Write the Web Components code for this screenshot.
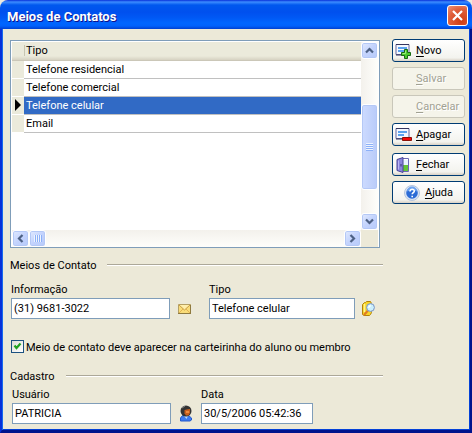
<!DOCTYPE html>
<html lang="pt-BR">
<head>
<meta charset="utf-8">
<title>Meios de Contatos</title>
<style>
  html, body { margin: 0; height: 100%; background: #eceadf; }
  body { font: 11px/16px Roboto, "Liberation Sans", sans-serif; color: #000; }
  .main { display: flex; flex-direction: column; flex: 1; min-width: 0; padding-top: 1px; }
  .row { display: flex; align-items: flex-end; }
  .contact { margin-top: 9px; padding-left: 1px; }
  .record { margin-top: 3px; padding-left: 2px; }
  .side { display: flex; flex-direction: column; gap: 5px; width: 73px; }
  .exit { display: flex; flex-direction: column; gap: 5px; margin-top: 2px; }
</style>
</head>
<body>
<xp-window caption="Meios de Contatos">
  <div class="main">
    <contact-grid></contact-grid>
    <section-title style="margin-top:9px">Meios de Contato</section-title>
    <div class="row contact">
      <text-field label="Informação" value="(31) 9681-3022" style="flex:159"></text-field>
      <app-icon name="mail"></app-icon>
      <text-field label="Tipo" value="Telefone celular" style="flex:146"></text-field>
      <app-icon name="search"></app-icon>
    </div>
    <check-field label="Meio de contato deve aparecer na carteirinha do aluno ou membro"></check-field>
    <section-title style="margin-top:12px">Cadastro</section-title>
    <div class="row record">
      <text-field label="Usuário" value="PATRICIA" style="flex:159"></text-field>
      <app-icon name="user"></app-icon>
      <text-field label="Data" value="30/5/2006 05:42:36" style="flex:112"></text-field>
      <span style="flex:70"></span>
    </div>
  </div>
  <div class="side">
    <action-button icon="add" text="Novo"></action-button>
    <action-button text="Salvar" disabled></action-button>
    <action-button text="Cancelar" disabled></action-button>
    <action-button icon="remove" text="Apagar"></action-button>
    <div class="exit">
      <action-button icon="door" text="Fechar"></action-button>
      <action-button icon="help" text="Ajuda" centered></action-button>
    </div>
  </div>
</xp-window>

<script>
const card = `
  <path d="M1 1.500h13v10H1z" fill="#f4f8ff" stroke="#67679c"/>
  <path d="M1 1.500h13" stroke="#34345e"/><path d="M1 12h13" stroke="#34345e"/>
  <path d="M3 5h9" stroke="#2a86e8" stroke-width="1.500"/><path d="M3 8h6" stroke="#2a86e8" stroke-width="1.500"/>`;
const icons = {
  add: [17, 16, card + `<path d="M9.500 6.500h3v3h3v3h-3v3h-3v-3h-3v-3h3z" fill="#4cc92f" stroke="#176b12"/><path d="M10.500 7.500v3h-3" fill="none" stroke="#9cf07c"/>`],
  remove: [17, 16, card + `<path d="M7.500 10.500h9v3h-9z" fill="#f50808" stroke="#8d1208"/>`],
  door: [15, 16, `
    <path d="M5.500 1.500h8v13h-8z" fill="#fff" stroke="#6c68b5"/>
    <path d="M7 8h6v6H7z" fill="#65c636"/><path d="M7 3h6v5H7z" fill="#e9f5ff"/>
    <path d="M2 2.500l6-2v15l-6-2z" fill="#8a85dc" stroke="#4a4595"/>
    <path d="M3.500 3.500v9" stroke="#bab6f5"/><path d="M6 7v2.500" stroke="#33306c"/>`],
  help: [16, 16, `
    <circle cx="8" cy="8" r="7.500" fill="#d9e4f4" stroke="#b4c4dd"/><circle cx="8" cy="8" r="5.800" fill="#2b6bd6"/>
    <path d="M3 6.500a5 5 0 0 1 10 0q-5-2-10 0z" fill="#6ea4f0"/>
    <path d="M6 6.500c0-3.200 4.500-2.800 4.300-.3C10.200 7.600 8.200 7.700 8.200 9.300M8.200 10.700v1.600" fill="none" stroke="#fff" stroke-width="1.600"/>`],
  mail: [13, 10, `
    <path d="M.5.500h12v9H.5z" fill="#f9dc78" stroke="#b5a063"/>
    <path d="M1 1l5.500 5L12 1" fill="#ffeeaa" stroke="#c89c42"/><path d="M1 9l4-4M12 9L8 5" stroke="#e3b352"/>
    <path d="M0 9.500h13M12.500 1v9" stroke="#8f7a3f"/>`],
  search: [13, 15, `
    <path d="M.5 3.500l2-2h1l1-1h4l1 2v9l-1 2-1 1H2l-1.500-1z" fill="#f7d428" stroke="#b28208"/>
    <path d="M2.500 3v8" stroke="#fff391" stroke-width="1.500"/>
    <path d="M6 9.500L2 14" stroke="#e07a24" stroke-width="2"/>
    <circle cx="8.500" cy="6.500" r="3.900" fill="#ccf0fc" stroke="#7793c4"/><path d="M6.500 6.500l2-2" stroke="#fff" stroke-width="1.500"/>`],
  user: [12, 17, `
    <path d="M.5 16v-3l2-2.500h6l3 2.500v2l-1.500 1z" fill="#3e7bf0" stroke="#2259cb"/>
    <path d="M4 11l2.500 3L8 11z" fill="#b7dcff"/>
    <circle cx="6" cy="6" r="5.500" fill="#343434"/><path d="M2 3l3-2" stroke="#888"/>
    <path d="M4.500 5q4-1 5.500-1v4L8.500 10.500H6L4.500 8.500z" fill="#c95f1d"/><path d="M6 6h3v2H6z" fill="#ee8a3c"/>`]
};
const svg = (name) => {
  const [w, h, body] = icons[name];
  return `<svg width="${w}" height="${h}" viewBox="0 0 ${w} ${h}" fill="none" aria-hidden="true">${body}</svg>`;
};
const chevron = (deg) => `<svg width="9" height="9" viewBox="0 0 9 9" fill="none" aria-hidden="true"><path d="M1 6.500L4.500 3L8 6.500" stroke="#4d6185" stroke-width="2.200" transform="rotate(${deg} 4.500 4.500)"/></svg>`;

class Base extends HTMLElement {
  connectedCallback() {
    if (!this.shadowRoot) this.attachShadow({ mode: "open" }).innerHTML =
      `<style>*{box-sizing:border-box}${this.css()}</style>${this.html()}`;
  }
}

customElements.define("xp-window", class extends Base {
  css() { return `
    :host { display: flex; flex-direction: column; min-height: 100vh; box-sizing: border-box; overflow: hidden;
      border-radius: 8px 8px 0 0; background: #ece9d8; }
    header { display: flex; align-items: center; justify-content: space-between; height: 29px; padding: 3px 4px 1px 7px;
      background: linear-gradient(#0831d9 0, #3c8cff 2px, #0058ee 5px, #0050ee 12px, #0059f5 18px, #0066ff 23px, #0061fc 26px, #0040d0 29px); }
    h1 { margin: 0; padding-top: 2px; font: bold 13px/18px Roboto, "Liberation Sans", sans-serif; color: #fff; text-shadow: 1px 1px #0f1089; }
    button { display: flex; align-items: center; justify-content: center; width: 21px; height: 21px; padding: 0;
      border: 1px solid #fff; border-radius: 3px; background: radial-gradient(circle at 70% 80%, #cf3c12, #e0603c 60%, #ee947c); }
    .body { display: flex; align-items: flex-start; gap: 9px; flex: 1; padding: 10px 5px 0 8px;
      border: solid; border-width: 0 2px 3px; border-color: #0019cf #00138c #00138c #0831d9;
      box-shadow: inset 1px 0 #166aee, inset -1px 0 #0441d8, inset 0 -1px #0441d8; }`; }
  html() { return `<header><h1>${this.getAttribute("caption")}</h1>
    <button aria-label="Fechar janela"><svg width="13" height="13" viewBox="0 0 13 13"><path d="M2 2l9 9M11 2l-9 9" stroke="#fff" stroke-width="2.200"/></svg></button></header>
    <div class="body"><slot></slot></div>`; }
});

customElements.define("contact-grid", class extends Base {
  css() { return `
    :host { display: grid; grid-template: 188px 17px / 1fr 17px; margin-right: 3px; padding: 1px 1px 0; border: 1px solid #7f9db9;
      background: #fff; box-sizing: border-box; height: 208px; }
    table { width: 100%; border-collapse: collapse; table-layout: fixed; }
    col.mark { width: 12px; }
    tr { height: 18px; }
    th, td { padding: 1px 0 0 1px; height: 18px; text-align: left; font-weight: normal; border-bottom: 1px solid #c0c0c0; line-height: 16px; }
    thead th { background: linear-gradient(#ebeadb 14px, #d6d2c2); border-bottom-color: #cbc7b8; }
    thead th + th { background: linear-gradient(#c7c5b2, #c7c5b2) 0 3px / 1px 11px no-repeat, linear-gradient(#ebeadb 14px, #d6d2c2); padding-left: 2px; }
    tbody td:first-child { background: #ebeadb; border-bottom-color: #fff; padding: 0 0 0 3px; }
    tbody td + td { padding-left: 2px; }
    tr.on td + td { background: #316ac5; color: #fff; }
    svg { display: block; }
    .v, .h { display: flex; background: linear-gradient(90deg, #f3f1ec, #fefefb); }
    .v { flex-direction: column; }
    .h { background: linear-gradient(#f3f1ec, #fefefb); }
    .corner { background: #ece9d8; }
    .v button, .h button, .thumb { display: flex; align-items: center; justify-content: center; flex: none; width: 17px; height: 17px; padding: 0;
      border: 1px solid #fff; border-radius: 3px; background: linear-gradient(135deg, #e1eafe, #c3d3fd 50%, #b6cafa); box-shadow: inset 0 0 0 1px #b4c8f6; }
    .v .thumb { height: 86px; background: linear-gradient(90deg, #cddbff, #b9cbf9); }
    .thumb i { width: 7px; height: 8px; background: repeating-linear-gradient(#eef4fe 0 1px, #8cb0f8 1px 2px); }
    .h .thumb i { width: 8px; height: 7px; background: repeating-linear-gradient(90deg, #eef4fe 0 1px, #8cb0f8 1px 2px); }
    .v .before { flex: 45; } .v .after { flex: 23; } .h .after { flex: 1; }`; }
  html() {
    const rows = ["Telefone residencial", "Telefone comercial", "Telefone celular", "Email"];
    return `<div><table><colgroup><col class="mark"><col></colgroup><thead><tr><th></th><th scope="col">Tipo</th></tr></thead><tbody>${
      rows.map((r, i) => `<tr${i === 2 ? ' class="on"' : ""}><td>${i === 2 ? '<svg width="6" height="12"><path d="M0 0l6 6-6 6z"/></svg>' : ""}</td><td>${r}</td></tr>`).join("")
    }</tbody></table></div>
    <div class="v"><button aria-label="Para cima">${chevron(0)}</button><span class="before"></span><span class="thumb"><i></i></span><span class="after"></span><button aria-label="Para baixo">${chevron(180)}</button></div>
    <div class="h"><button aria-label="Para a esquerda">${chevron(-90)}</button><span class="thumb"><i></i></span><span class="after"></span><button aria-label="Para a direita">${chevron(90)}</button></div>
    <div class="corner"></div>`;
  }
});

customElements.define("section-title", class extends Base {
  css() { return `
    :host { display: flex; align-items: center; gap: 11px; height: 16px; }
    h2 { margin: 0; padding-top: 2px; font: inherit; }
    hr { flex: 1; height: 2px; margin: 0; border: 0; border-top: 1px solid #aca899; border-bottom: 1px solid #fff; }`; }
  html() { return `<h2><slot></slot></h2><hr>`; }
});

customElements.define("text-field", class extends Base {
  css() { return `
    :host { display: flex; flex-direction: column; min-width: 0; }
    input { width: 100%; height: 21px; padding: 0 2px; border: 1px solid #7f9db9; background: #fff; color: #000; font: inherit; }`; }
  html() { return `<label for="f">${this.getAttribute("label")}</label><input id="f" type="text" value="${this.getAttribute("value")}">`; }
});

customElements.define("check-field", class extends Base {
  css() { return `
    :host { display: flex; margin-top: 21px; padding-left: 1px; }
    label { display: flex; align-items: flex-start; gap: 2px; white-space: nowrap; }
    input { appearance: none; width: 13px; height: 13px; margin: 0; border: 1px solid #1c5180; background: linear-gradient(135deg, #dcdcd7, #fff); }
    .box { display: grid; } .box > * { grid-area: 1 / 1; } svg { z-index: 1; pointer-events: none; visibility: hidden; }
    input:checked + svg { visibility: visible; }`; }
  html() { return `<label><span class="box"><input type="checkbox" checked><svg width="13" height="13" viewBox="0 0 13 13" fill="none"><path d="M3.500 5.500L5.500 8l4-4.500" stroke="#21a121" stroke-width="2.200"/></svg></span>${this.getAttribute("label")}</label>`; }
});

customElements.define("app-icon", class extends Base {
  css() { return `:host { display: flex; align-items: center; justify-content: center; flex: 0 0 30px; height: 21px; } :host([name=mail]) { flex-basis: 39px; justify-content: flex-start; padding-left: 8px; box-sizing: border-box; } :host([name=search]) { flex-basis: 28px; justify-content: flex-start; padding-left: 7px; box-sizing: border-box; }`; }
  html() { return svg(this.getAttribute("name")); }
});

customElements.define("action-button", class extends Base {
  css() { return `
    :host { display: block; }
    button { display: grid; grid-template-columns: 21px 1fr; align-items: center; width: 100%; height: 23px; padding: 1px 2px 0;
      border: 1px solid #003c74; border-radius: 3px; background: linear-gradient(#fff, #f3f3ee 85%, #d8d1c5);
      font: inherit; color: #000; text-align: left; }
    button svg { display: block; }
    :host([centered]) button { display: flex; justify-content: center; gap: 5px; }
    button:disabled { border-color: #c9c7ba; background: #f5f4ea; color: #a1a192; text-shadow: 1px 1px #fff; }
    u { text-underline-offset: 2px; }`; }
  html() {
    const t = this.getAttribute("text"), icon = this.getAttribute("icon");
    return `<button type="button"${this.hasAttribute("disabled") ? " disabled" : ""}><span>${icon ? svg(icon) : ""}</span><span><u>${t[0]}</u>${t.slice(1)}</span></button>`;
  }
});
</script>
</body>
</html>
